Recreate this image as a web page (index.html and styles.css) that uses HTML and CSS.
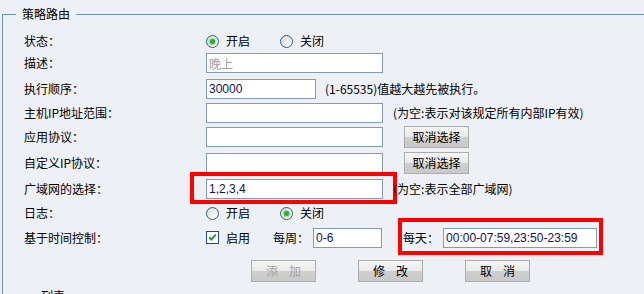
FILE: index.html
```html
<!DOCTYPE html>
<html lang="zh-CN">
<head>
<meta charset="utf-8">
<title>策略路由</title>
<link rel="stylesheet" href="styles.css">
</head>
<body>
<fieldset class="panel">
  <legend class="panel-title">策略路由</legend>
  <div class="form">
    <div class="lbl">状态：</div>
    <div class="ctl">
      <span class="radio on"></span><span class="opt">开启</span>
      <span class="radio"></span><span class="opt">关闭</span>
    </div>

    <div class="lbl">描述：</div>
    <div class="ctl"><input class="txt w177 muted" type="text" value="晚上"></div>

    <div class="lbl">执行顺序：</div>
    <div class="ctl"><input class="txt w110" type="text" value="30000"><span class="note n1">(1-65535)值越大越先被执行。</span></div>

    <div class="lbl">主机IP地址范围：</div>
    <div class="ctl"><input class="txt w177" type="text" value=""><span class="note n2">(为空:表示对该规定所有内部IP有效)</span></div>

    <div class="lbl">应用协议：</div>
    <div class="ctl"><input class="txt w177" type="text" value=""><button class="btn sel">取消选择</button></div>

    <div class="lbl">自定义IP协议：</div>
    <div class="ctl"><input class="txt w177" type="text" value=""><button class="btn sel">取消选择</button></div>

    <div class="lbl">广域网的选择：</div>
    <div class="ctl"><span class="mark mark-wan"><input class="txt w177" type="text" value="1,2,3,4"></span><span class="note n3">(为空:表示全部广域网)</span></div>

    <div class="lbl">日志：</div>
    <div class="ctl">
      <span class="radio"></span><span class="opt">开启</span>
      <span class="radio on"></span><span class="opt">关闭</span>
    </div>

    <div class="lbl">基于时间控制：</div>
    <div class="ctl">
      <span class="check"><svg viewBox="0 0 11 11" width="11" height="11"><path d="M2.2 5.2 L4.4 7.6 L8.8 2.6" fill="none" stroke="#1f9a2a" stroke-width="2"/></svg></span>
      <span class="opt">启用</span>
      <span class="week">每周：</span><input class="txt w69" type="text" value="0-6">
      <span class="mark mark-day"><span class="day">每天：</span><input class="txt w154" type="text" value="00:00-07:59,23:50-23:59"></span>
    </div>
  </div>
  <div class="actions">
    <button class="btn act off">添加</button>
    <button class="btn act">修改</button>
    <button class="btn act">取消</button>
  </div>
  <div class="list-title">列表</div>
</fieldset>
</body>
</html>
```

FILE: styles.css
```css
html, body {
  margin: 0;
  padding: 0;
  background: #edf1f5;
  overflow: hidden;
}
body {
  padding-top: 6px;
  font-family: "Noto Sans CJK SC", "Liberation Sans", sans-serif;
  font-size: 12px;
  line-height: 16px;
  color: #000;
}
.panel {
  margin: 0 0 0 2px;
  padding: 0;
  border: 1px solid #7392ba;
  width: 720px;
  height: 400px;
  box-sizing: border-box;
}
.panel-title {
  margin-left: 13px;
  padding: 0 6px;
  line-height: 16px;
  color: #000;
}
.form {
  display: grid;
  grid-template-columns: 182px auto;
  grid-template-rows: 22px 22px 29px 20px 28px 24px 28px 20px 29px;
  align-items: center;
  padding: 8px 0 0 21px;
}
.lbl {
  white-space: nowrap;
}
.ctl {
  display: flex;
  align-items: center;
  white-space: nowrap;
  height: 100%;
}
.radio {
  width: 13px;
  height: 13px;
  box-sizing: border-box;
  border-radius: 50%;
  border: 1px solid #2a5d8f;
  background: linear-gradient(135deg, #d6d6d6 0%, #eeeeee 50%, #ffffff 100%);
  display: flex;
  align-items: center;
  justify-content: center;
  flex: none;
}
.radio.on::after {
  content: "";
  width: 5px;
  height: 5px;
  border-radius: 50%;
  background: #2cae2c;
  box-shadow: 0 0 1px 1px #8fd88f;
}
.opt {
  margin-left: 7px;
  margin-right: 30px;
}
.txt {
  height: 20px;
  box-sizing: border-box;
  border: 1px solid #7f9db9;
  background: #fff;
  padding: 0 2px;
  margin: 0;
  font-family: "Liberation Sans", Arial, sans-serif;
  font-size: 12px;
  color: #10105a;
  outline: none;
}
.txt.muted {
  color: #a0a0a0;
  font-family: "Noto Sans CJK SC", sans-serif;
}
.w177 { width: 177px; }
.w110 { width: 110px; }
.w69 { width: 69px; }
.w154 { width: 154px; }
.note { margin-left: 9px; }
.note.n2 { margin-left: 10px; }
.note.n3 { margin-left: 10px; position: relative; }
.btn {
  height: 22px;
  width: 65px;
  box-sizing: border-box;
  border: 1px solid #adadad;
  background: linear-gradient(#f6f6f6 0%, #e9e9e9 48%, #cfcfcf 52%, #c9c9c9 100%);
  font-family: "Noto Sans CJK SC", sans-serif;
  font-size: 12px;
  color: #000;
  padding: 0;
  margin: 0;
  line-height: 20px;
}
.btn.sel { margin-left: 21px; }
.btn.act {
  letter-spacing: 11px;
  padding-left: 11px;
}
.btn.off { color: #a4a4a4; }
.mark { position: relative; display: inline-flex; align-items: center; }
.mark::after {
  content: "";
  position: absolute;
  border: 4px solid #ff0000;
  pointer-events: none;
}
.mark-wan::after { left: -16px; right: -14px; top: -7px; bottom: -5px; }
.mark-day { margin-left: 21px; }
.mark-day::after { left: -5px; right: -6px; top: -10px; bottom: -7px; }
.check {
  width: 13px;
  height: 13px;
  box-sizing: border-box;
  border: 1px solid #1c4f80;
  background: #fff;
  display: flex;
  align-items: center;
  justify-content: center;
  flex: none;
}
.check svg { display: block; }
.week { margin-left: -7px; margin-right: 4px; }
.day { margin-right: 4px; }
.actions {
  display: flex;
  gap: 42px;
  padding-left: 248px;
  margin-top: 8px;
}
.list-title {
  margin: 6px 0 0 38px;
  color: #000033;
}
```
